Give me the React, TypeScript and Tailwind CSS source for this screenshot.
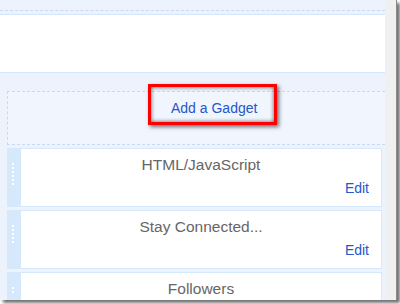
const font = { fontFamily: '"Liberation Sans", Arial, sans-serif' }

function Handle({ dots }: { dots: number }) {
  return (
    <div className="w-[13px] bg-[#d5e8fc] flex flex-col items-center pt-[15px] gap-[2px]">
      {Array.from({ length: dots }).map((_, i) => (
        <span key={i} className="block w-[2px] h-[2px] bg-white ml-[-2px]" />
      ))}
    </div>
  )
}

function Gadget({ title, edit = true, dots = 6 }: { title: string; edit?: boolean; dots?: number }) {
  return (
    <div className="flex h-[59px] shrink-0">
      <Handle dots={dots} />
      <div className="flex-1 bg-white border border-[#d5e8fc] flex flex-col pt-[7px] pr-[12px]">
        <div className="text-center text-[15.5px] leading-[18px] text-[#666666] pl-[12px]">{title}</div>
        {edit && (
          <div className="text-right text-[14px] leading-[16px] text-[#2457c9] mt-[6px]">Edit</div>
        )}
      </div>
    </div>
  )
}

export default function App() {
  return (
    <div className="w-[400px] h-[304px] bg-white overflow-hidden" style={font}>
      <div className="w-[397px] h-[300px] flex shadow-[3px_3px_3px_rgba(0,0,0,0.55)]">
        {/* page content */}
        <div className="w-[385px] flex flex-col bg-[#edf3fd] overflow-hidden">
          <div className="h-[15px] shrink-0 border-b border-[#d4e6fb]">
            <div className="mt-[10px] border-t border-dashed border-[#cbd8f5]" />
          </div>
          <div className="h-[57px] shrink-0 bg-white" />
          <div className="flex-1 border-t border-[#d4e6fb] pl-[7px] pr-[3px] pt-[18px] relative">
            {/* drop zone */}
            <div className="h-[54px] border-t border-l border-b border-dashed border-[#cbd8f5] bg-[#f0f5fe] pt-[4px] pl-[163px] mr-[-3px]">
              <span className="text-[14px] leading-[16px] text-[#2457c9]">Add a Gadget</span>
            </div>
            <div className="flex flex-col gap-[3px] mt-[3px]">
              <Gadget title="HTML/JavaScript" />
              <Gadget title="Stay Connected..." dots={5} />
              <Gadget title="Followers" edit={false} dots={2} />
            </div>
            {/* highlight annotation */}
            <div className="absolute left-[148px] top-[11px] w-[129px] h-[41px] border-[3px] border-[#ff0000] shadow-[2px_2px_4px_rgba(0,0,0,0.55),inset_0_0_4px_rgba(0,0,0,0.65)]" />
          </div>
        </div>
        {/* scrollbar */}
        <div className="w-[12px] bg-[#f0f0f0] border-r border-[#8a8a8a]" />
      </div>
    </div>
  )
}
